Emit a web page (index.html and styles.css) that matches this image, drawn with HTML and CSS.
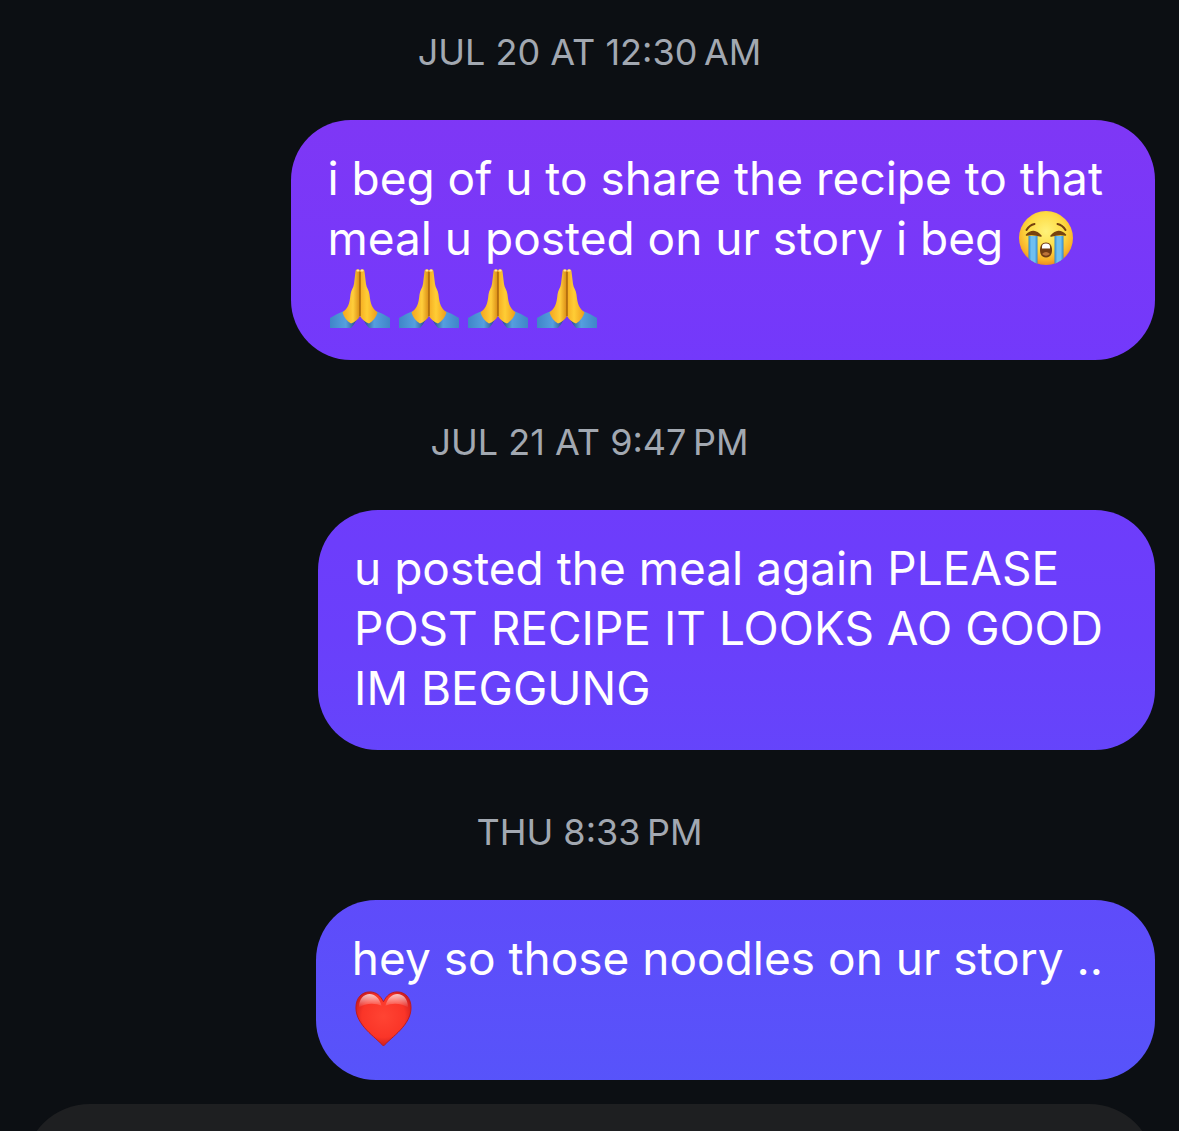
FILE: index.html
```html
<!DOCTYPE html>
<html lang="en">

<head>
  <meta charset="UTF-8">
  <meta name="viewport" content="width=device-width, initial-scale=1.0">
  <title>Messages</title>
  <link rel="stylesheet" href="styles.css">
</head>

<body>
  <!-- Shared emoji shapes -->
  <svg class="symbols" aria-hidden="true">
    <defs>
      <radialGradient id="face" cx="50%" cy="38%" r="62%">
        <stop offset="0" stop-color="#fff27a"/>
        <stop offset=".55" stop-color="#fedb43"/>
        <stop offset=".85" stop-color="#f9b128"/>
        <stop offset="1" stop-color="#ec8c22"/>
      </radialGradient>
      <linearGradient id="hand-left" x1="0" x2="1" y1="0" y2="0">
        <stop offset="0" stop-color="#f5a51d"/>
        <stop offset=".6" stop-color="#ffce3b"/>
        <stop offset="1" stop-color="#d98a14"/>
      </linearGradient>
      <linearGradient id="hand-right" x1="0" x2="1" y1="0" y2="0">
        <stop offset="0" stop-color="#f5ad22"/>
        <stop offset=".4" stop-color="#ffcd35"/>
        <stop offset="1" stop-color="#ee9d1b"/>
      </linearGradient>
      <linearGradient id="sleeve-left" x1="0" x2="1" y1="0" y2="0">
        <stop offset="0" stop-color="#3f86c8"/>
        <stop offset=".6" stop-color="#559fdf"/>
        <stop offset="1" stop-color="#284a86"/>
      </linearGradient>
      <linearGradient id="sleeve-right" x1="1" x2="0" y1="0" y2="0">
        <stop offset="0" stop-color="#3f86c8"/>
        <stop offset=".6" stop-color="#559fdf"/>
        <stop offset="1" stop-color="#284a86"/>
      </linearGradient>
      <radialGradient id="heart-fill" cx="50%" cy="45%" r="60%">
        <stop offset="0" stop-color="#ff4433"/>
        <stop offset=".65" stop-color="#fa3528"/>
        <stop offset="1" stop-color="#c5171c"/>
      </radialGradient>
      <linearGradient id="shine" x1="0" x2="0" y1="0" y2="1">
        <stop offset="0" stop-color="#fff" stop-opacity=".75"/>
        <stop offset="1" stop-color="#fff" stop-opacity="0"/>
      </linearGradient>
      <clipPath id="face-clip"><circle cx="30" cy="30" r="27"/></clipPath>
    </defs>

    <symbol id="crying" viewBox="0 0 60 60">
      <circle cx="30" cy="30" r="27" fill="url(#face)"/>
      <g clip-path="url(#face-clip)">
        <path d="M13 28h8v30h-8z M39 28h8v30h-8z" fill="#5bb0ea"/>
        <path d="M15 28h4v30h-4z M41 28h4v30h-4z" fill="#6fbff0"/>
        <path d="M13 28v30 M21 28v30 M39 28v30 M47 28v30" stroke="#3486c8" stroke-width="1"/>
      </g>
      <path d="M10.500 22q3-5 8-6 M41.500 16q5 1 8 6" fill="none" stroke="#76410f" stroke-width="2" stroke-linecap="round"/>
      <path d="M10.500 27q7-7.500 14.500 1q-8-2.500-14.500-1z M35 28q7.500-8.500 14.500-1q-6.500-1.500-14.500 1z" fill="#78430f" stroke="#78430f" stroke-width="1.500" stroke-linejoin="round"/>
      <path d="M30 34.500c-4 0-6 3-6 7.500s2 7.500 6 7.500 6-3 6-7.500-2-7.500-6-7.500z" fill="#713b13"/>
      <path d="M26 38.500q0-3 4-3t4 3v2h-8z" fill="#fff"/>
      <path d="M26 46q4-4 8 0q-4 3.500-8 0z" fill="#bd7339"/>
    </symbol>

    <symbol id="pray" viewBox="-2 0 60 60" overflow="visible">
      <path d="M15 43Q7 46 1 50V60h21q3-3 5.500-8z" fill="url(#sleeve-left)"/>
      <path d="M47 43q8 3 14 7V60H40q-3-3-5.500-8z" fill="url(#sleeve-right)"/>
      <path d="M31 2.500c-1.500-2-4.500-1.500-4.500 1L25 16c-.5 4-3 6-3.500 10.500-.5 4.500-1 8.500-2.500 11.500-1.500 3-3.500 4.500-5.500 6.500 1.500 5 4.500 8.500 8.500 11 4-1.500 7-4 9-7.500z" fill="url(#hand-left)"/>
      <path d="M31 2.500c1.500-2 4.500-1.500 4.500 1L37 16c.5 4 3 6 3.500 10.500.5 4.500 1 8.500 2.500 11.500 1.500 3 3.500 4.500 5.500 6.500-1.500 5-4.500 8.500-8.500 11-4-1.500-7-4-9-7.500z" fill="url(#hand-right)"/>
      <path d="M31 4v44" stroke="#a8640e" stroke-width="1.500"/>
      <path d="M28.500 2.500h1 M32.500 2.500h1" stroke="#ffe5a0" stroke-width="2" stroke-linecap="round"/>
    </symbol>

    <symbol id="heart" viewBox="-2 -2 61 61" overflow="visible">
      <path d="M30 57C22 48 2 36 2 18 2 8 8 2 16 2c7 0 11 4 14 10 3-6 7-10 14-10 8 0 14 6 14 16 0 18-20 30-28 39z" fill="url(#heart-fill)" stroke="#bd1b1f" stroke-width="1"/>
      <path d="M5 18C5 9 10 4 16 4c5 0 10 4 12 12-6-3-17-3-23 2z M32 16c2-8 7-12 12-12 6 0 11 5 11 14-6-5-17-5-23-2z" fill="url(#shine)"/>
    </symbol>
  </svg>

  <main class="thread">
    <time class="timestamp">JUL 20 AT 12:30&#8239;AM</time>
    <p class="bubble">i beg of u to share the recipe to that<br>meal u posted on ur story i beg <svg class="emoji" role="img" aria-label="Loudly crying face"><use href="#crying"/></svg><br><span class="emoji-row"><svg class="emoji" role="img" aria-label="Folded hands"><use href="#pray"/></svg><svg class="emoji" role="img" aria-label="Folded hands"><use href="#pray"/></svg><svg class="emoji" role="img" aria-label="Folded hands"><use href="#pray"/></svg><svg class="emoji" role="img" aria-label="Folded hands"><use href="#pray"/></svg></span></p>

    <time class="timestamp">JUL 21 AT 9:47&#8239;PM</time>
    <p class="bubble">u posted the meal again PLEASE<br>POST RECIPE IT LOOKS AO GOOD<br>IM BEGGUNG</p>

    <time class="timestamp">THU 8:33&#8239;PM</time>
    <p class="bubble">hey so those noodles on ur story ..<br><svg class="emoji" role="img" aria-label="Red heart"><use href="#heart"/></svg></p>
  </main>

  <form class="composer">
    <input type="text" aria-label="Message">
  </form>
</body>

</html>
```

FILE: styles.css
```css
* {
  margin: 0;
  padding: 0;
  box-sizing: border-box;
}

body {
  display: flex;
  flex-direction: column;
  height: 100vh;
  overflow: hidden;
  background: #0c0f13;
  font-family: Inter, "Liberation Sans", sans-serif;
}

.symbols {
  position: absolute;
  width: 0;
  height: 0;
}

/* Messages */
.thread {
  flex: none;
  display: flex;
  flex-direction: column;
  align-items: flex-end;
  padding: 30px 24px 24px;
}

.timestamp {
  align-self: center;
  margin-bottom: 46px;
  color: #a2a8b1;
  font-size: 36px;
  line-height: 44px;
}

.bubble {
  max-width: 100%;
  margin-bottom: 60px;
  padding: 28px 52px 32px 36px;
  border-radius: 60px;
  /* one gradient runs behind the whole thread */
  background: linear-gradient(#8436f3, #7339fb 32%, #6a3ffb 56%, #5556fa) fixed;
  color: #fff;
  font-size: 46px;
  line-height: 60px;
}

.bubble:last-child {
  margin-bottom: 0;
}

.emoji {
  width: 60px;
  height: 60px;
  overflow: visible;
  vertical-align: top;
}

.emoji-row {
  display: flex;
  gap: 9px;
}

/* Composer */
.composer {
  flex: 1;
  min-height: 0;
  padding: 0 24px;
  overflow: hidden;
}

.composer input {
  display: block;
  width: 100%;
  height: 132px;
  padding: 0 48px;
  border: none;
  border-radius: 66px;
  outline: none;
  background: #1e1f21;
  color: #fff;
  font: inherit;
  font-size: 46px;
}
```
